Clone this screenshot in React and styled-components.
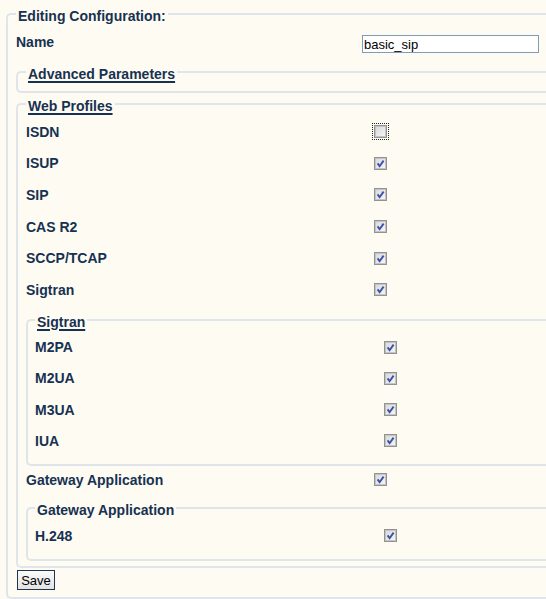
import styled, { createGlobalStyle, css } from "styled-components";

const GlobalStyle = createGlobalStyle`
  html, body {
    margin: 0;
    padding: 0;
    background: #fefcf2;
  }
  body {
    font-family: "Liberation Sans", Arial, sans-serif;
    color: #173152;
  }
`;

const Page = styled.form`
  padding: 4px 0 0 6px;
`;

const Fieldset = styled.fieldset`
  margin: ${(p) => p.$mt || 0}px 0 0 0;
  padding: ${(p) => p.$pt || 0}px 0 ${(p) => p.$pb || 0}px ${(p) => p.$pad ?? 8}px;
  border: 2px solid #dfe5ea;
  border-right: none;
  border-radius: 5px 0 0 5px;
  min-width: 0;
`;

const Legend = styled.legend`
  padding: 4px 2px 0;
  font-size: 14px;
  font-weight: bold;
  line-height: 16px;
  ${(p) =>
    p.$underline &&
    css`
      text-decoration: underline;
      text-decoration-thickness: 2px;
      text-underline-offset: 2px;
    `}
`;

const Row = styled.div`
  display: grid;
  grid-template-columns: ${(p) => p.$col || 348}px auto;
  align-items: ${(p) => p.$align || "center"};
  height: ${(p) => p.$h}px;
`;

const Label = styled.span`
  font-size: 14px;
  font-weight: bold;
  line-height: 16px;
`;

const TextInput = styled.input`
  box-sizing: border-box;
  width: 177px;
  height: 18px;
  margin: 1px 0 0;
  border: 1px solid #7f9db9;
  background: #fff;
  padding: 0 1px;
  font: 13px "Liberation Sans", Arial, sans-serif;
  color: #000;
  outline: none;
`;

const Box = styled.span`
  display: inline-flex;
  width: 13px;
  height: 13px;
  ${(p) =>
    p.$focus &&
    css`
      outline: 1px dotted #222;
      outline-offset: 1px;
    `}
`;

const SaveButton = styled.button`
  display: block;
  margin: 2px 0 0 1px;
  width: 38px;
  height: 20px;
  padding: 0;
  border: 1px solid #1f3550;
  background: linear-gradient(#fbfbfb, #e2e2e2);
  font: 13px "Liberation Sans", Arial, sans-serif;
  color: #000;
`;

const Check = ({ checked = true, focus }) => (
  <Box $focus={focus}>
    <svg width="13" height="13" viewBox="0 0 13 13">
      <defs>
        <linearGradient id="cbg" x1="0" y1="0" x2="1" y2="1">
          <stop offset="0" stopColor="#d6d6d6" />
          <stop offset="1" stopColor="#f9f9f9" />
        </linearGradient>
      </defs>
      <rect x="0.5" y="0.5" width="12" height="12" fill="url(#cbg)" stroke="#929292" />
      <rect x="1.5" y="1.5" width="10" height="10" fill="none" stroke="#c4c4c4" />
      {checked && (
        <path d="M3.6 6.4 L5.6 9.2 L9.6 3.6" fill="none" stroke="#3a52a6" strokeWidth="1.9" />
      )}
    </svg>
  </Box>
);

const webProfiles = ["ISUP", "SIP", "CAS R2", "SCCP/TCAP", "Sigtran"];
const sigtran = ["M2PA", "M2UA", "M3UA", "IUA"];

export default function App() {
  return (
    <>
      <GlobalStyle />
      <Page onSubmit={(e) => e.preventDefault()}>
        <Fieldset $pt={10} $pb={7}>
          <Legend>Editing Configuration:</Legend>
          <Row $col={346} $h={19} $align="start">
            <Label>Name</Label>
            <TextInput defaultValue="basic_sip" />
          </Row>

          <Fieldset $mt={9} $pb={9}>
            <Legend $underline>Advanced Parameters</Legend>
          </Fieldset>

          <Fieldset $mt={1} $pt={2} $pb={5}>
            <Legend $underline>Web Profiles</Legend>
            <Row $h={31.6}>
              <Label>ISDN</Label>
              <Check checked={false} focus />
            </Row>
            {webProfiles.map((name) => (
              <Row key={name} $h={31.6}>
                <Label>{name}</Label>
                <Check />
              </Row>
            ))}

            <Fieldset $mt={4} $pt={2} $pb={8} $pad={7}>
              <Legend $underline>Sigtran</Legend>
              {sigtran.map((name) => (
                <Row key={name} $h={31.2} $col={349}>
                  <Label>{name}</Label>
                  <Check />
                </Row>
              ))}
            </Fieldset>

            <Row $h={27}>
              <Label>Gateway Application</Label>
              <Check />
            </Row>

            <Fieldset $mt={5} $pt={2} $pb={8} $pad={7}>
              <Legend>Gateway Application</Legend>
              <Row $h={31} $col={349}>
                <Label>H.248</Label>
                <Check />
              </Row>
            </Fieldset>
          </Fieldset>

          <SaveButton type="submit">Save</SaveButton>
        </Fieldset>
      </Page>
    </>
  );
}
